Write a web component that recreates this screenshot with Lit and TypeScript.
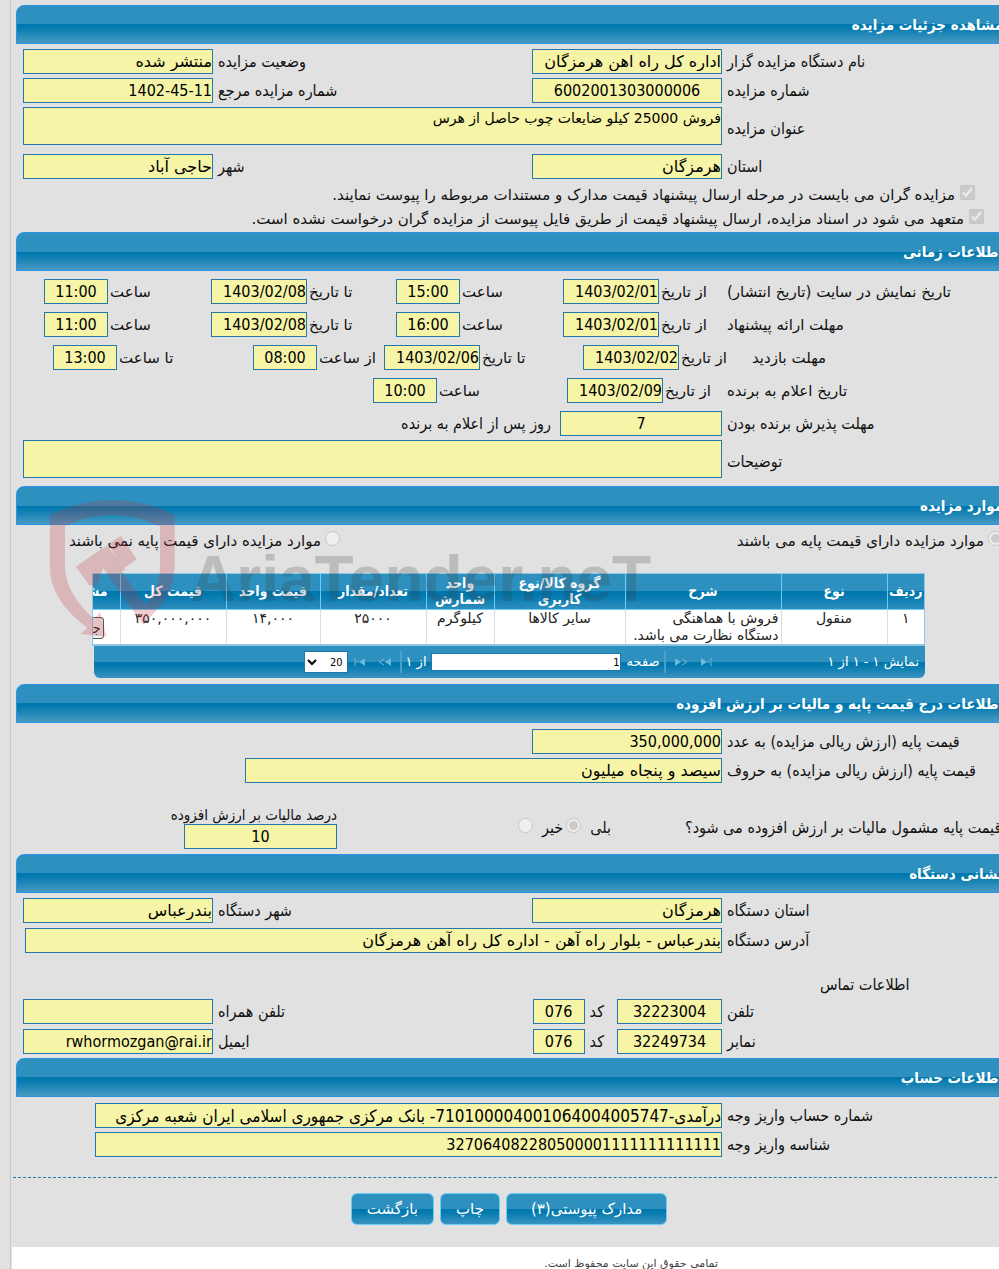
import { LitElement, html, css, svg, nothing } from "lit";
import { customElement } from "lit/decorators.js";

interface Pair {
  label: string;
  value: string;
  kind: "date" | "time";
}

interface TimeRow {
  title: string;
  cls: string;
  pairs: Pair[];
}

const d = (label: string, value: string): Pair => ({ label, value, kind: "date" });
const t = (label: string, value: string): Pair => ({ label, value, kind: "time" });

const TIME_ROWS: TimeRow[] = [
  {
    title: "تاریخ نمایش در سایت (تاریخ انتشار)",
    cls: "four",
    pairs: [d("از تاریخ", "1403/02/01"), t("ساعت", "15:00"), d("تا تاریخ", "1403/02/08"), t("ساعت", "11:00")],
  },
  {
    title: "مهلت ارائه پیشنهاد",
    cls: "four",
    pairs: [d("از تاریخ", "1403/02/01"), t("ساعت", "16:00"), d("تا تاریخ", "1403/02/08"), t("ساعت", "11:00")],
  },
  {
    title: "مهلت بازدید",
    cls: "visit",
    pairs: [d("از تاریخ", "1403/02/02"), d("تا تاریخ", "1403/02/06"), t("از ساعت", "08:00"), t("تا ساعت", "13:00")],
  },
  {
    title: "تاریخ اعلام به برنده",
    cls: "two",
    pairs: [d("از تاریخ", "1403/02/09"), t("ساعت", "10:00")],
  },
];

const COLUMNS = ["ردیف", "نوع", "شرح", "گروه کالا/نوع کاربری", "واحد شمارش", "تعداد/مقدار", "قیمت واحد", "قیمت کل"];
const ITEM = ["۱", "منقول", "فروش با هماهنگی دستگاه نظارت می باشد.", "سایر کالاها", "کیلوگرم", "۲۵۰۰۰", "۱۴,۰۰۰", "۳۵۰,۰۰۰,۰۰۰"];

@customElement("app-root")
export class AppRoot extends LitElement {
  static styles = css`
    :host {
      display: block;
      direction: rtl;
      overflow: hidden;
      background: #e1e1e1;
      color: #111;
      font: 16px/18px "DejaVu Sans Condensed", "DejaVu Sans", Tahoma, sans-serif;
    }
    * {
      box-sizing: border-box;
    }
    .page {
      margin-left: 10px;
      padding-top: 5px;
      border-left: 1px solid #c8c8c8;
      position: relative;
    }
    .bar {
      height: 39px;
      margin: 0 -8px 0 5px;
      padding: 0 3px 0 0;
      border: 1px solid #2b93e6;
      border-radius: 8px 8px 0 0;
      background: linear-gradient(#2e90bf 0 50%, #0078ae 50%, #0078ae 55%, #4799c2);
      color: #fff;
      font-size: 15px;
      font-weight: bold;
      line-height: 39px;
      white-space: nowrap;
    }
    .body {
      display: flex;
      flex-direction: column;
      gap: 4px;
      padding: 5px 0 5px 12px;
    }
    .body.start {
      padding-bottom: 1px;
    }
    .body.times {
      gap: 8px;
      padding: 8px 0 8px 12px;
    }
    .body.roomy {
      gap: 5px;
      padding-bottom: 4px;
    }
    .body.six {
      padding-top: 6px;
    }
    .row {
      display: flex;
      align-items: center;
      gap: 5px;
    }
    .pad {
      margin-top: 5px;
    }
    .snug {
      margin-top: -4px;
    }
    .lab {
      flex: none;
      width: 272px;
      text-align: left;
      white-space: nowrap;
    }
    .lab.low {
      padding-top: 6px;
    }
    .lab2 {
      flex: 1;
      text-align: left;
      white-space: nowrap;
    }
    input.f,
    textarea.f {
      display: block;
      flex: none;
      height: 25px;
      margin: 0;
      padding: 0;
      border: 1px solid #2379ae;
      border-radius: 0;
      background: #f6f4a6;
      color: #000;
      font: 16px/22px "DejaVu Sans Condensed", "DejaVu Sans", Tahoma, sans-serif;
      text-align: right;
      outline: none;
    }
    input.f.fa {
      font-family: "DejaVu Sans", Tahoma, sans-serif;
    }
    input.f.long {
      font-size: 17px;
    }
    input.mid {
      text-align: center;
    }
    .w190 {
      width: 190px;
    }
    .wide {
      flex: 1 !important;
      min-width: 0;
    }
    textarea.f {
      height: 38px;
      resize: none;
      overflow: hidden;
      font: 14px/20px "DejaVu Sans", Tahoma, sans-serif;
    }
    .check {
      display: flex;
      align-items: center;
      gap: 5px;
      height: 24px;
      padding-right: 24px;
      font: 15px/18px "DejaVu Sans", Tahoma, sans-serif;
      white-space: nowrap;
    }
    .check.near {
      padding-right: 15px;
    }
    .check input {
      width: 15px;
      height: 15px;
      margin: 0 0 6px;
    }
    .time {
      display: grid;
      align-items: center;
      font: 15px/18px "DejaVu Sans", Tahoma, sans-serif;
    }
    .time.four {
      grid-template-columns: 272px 164fr 167fr 185fr 167fr;
      padding-left: 21px;
    }
    .time.visit {
      grid-template-columns: 247px 169fr 199fr 131fr 200fr;
      padding-left: 30px;
    }
    .time.two {
      grid-template-columns: 272px 160fr 194fr 350fr;
    }
    .time .lab {
      width: auto;
    }
    .pair {
      display: flex;
      align-items: center;
      justify-content: flex-end;
      gap: 2px;
      white-space: nowrap;
    }
    .date {
      width: 96px;
    }
    .hour {
      width: 64px;
    }
    .days {
      width: 162px;
    }
    .after {
      padding-right: 4px;
    }

    .choices {
      display: flex;
      justify-content: space-between;
      height: 32px;
      align-items: center;
      padding-left: 58px;
      margin-right: -4px;
      font: 15px/18px "DejaVu Sans", Tahoma, sans-serif;
      white-space: nowrap;
    }
    .choices label {
      display: flex;
      align-items: center;
      gap: 4px;
    }
    input[type="radio"] {
      width: 15px;
      height: 15px;
      margin: 0 0 5px;
    }
    .gridbox {
      margin: 16px 74px 0 81px;
      overflow: hidden;
      border: 1px solid #8cc6e4;
      border-bottom-width: 2px;
      background: #fff;
    }
    table {
      width: 895px;
      border-collapse: collapse;
      table-layout: fixed;
      font: 14px/17px "DejaVu Sans", Tahoma, sans-serif;
    }
    th {
      height: 35px;
      padding: 0;
      border-left: 1px solid #6bcdf7;
      border-bottom: 1px solid #6bcdf7;
      background: linear-gradient(#2e90bf 0 50%, #0078ae 50%, #0078ae 60%, #2f8dbc);
      color: #fff;
      font: bold 14px/16px "DejaVu Sans Condensed", Tahoma, sans-serif;
    }
    th.c3 {
      padding: 0 16px;
    }
    td {
      height: 35px;
      padding: 0 2px;
      border-left: 1px solid #dcdcdc;
      vertical-align: top;
      text-align: center;
      color: #222;
    }
    td.desc {
      padding-left: 6px;
      text-align: right;
    }
    th.view {
      text-align: right;
      padding-right: 12px;
    }
    td.view {
      text-align: right;
      padding: 7px 16px 0 0;
    }
    .c0 { width: 37px; }
    .c1 { width: 106px; }
    .c2 { width: 156px; }
    .c3 { width: 131px; }
    .c4 { width: 68px; }
    .c5 { width: 106px; }
    .c6 { width: 94px; }
    .c7 { width: 106px; }
    .details {
      height: 22px;
      padding: 0 2px;
      border: 1px solid #555;
      border-radius: 3px;
      background: #efefef;
      font: 14px/18px "DejaVu Sans Condensed", "DejaVu Sans", sans-serif;
      color: #222;
    }
    .pager {
      display: grid;
      grid-template-columns: 1fr auto 1fr;
      align-items: center;
      height: 32px;
      margin: 0 74px 6px 83px;
      padding: 0 6px 0 8px;
      border-radius: 0 0 6px 6px;
      background: linear-gradient(#2e90bf 0 50%, #0078ae 50%, #0078ae 58%, #3a93c0);
      color: #fff;
      font: 13px/18px "DejaVu Sans", Tahoma, sans-serif;
      white-space: nowrap;
    }
    .tools {
      display: flex;
      align-items: center;
    }
    .tools label {
      display: flex;
      align-items: center;
      gap: 6px;
    }
    .nav {
      display: block;
      width: 14px;
      height: 10px;
      margin: 0 5px;
      padding: 0;
      border: 0;
      background: none;
    }
    .nav svg {
      display: block;
    }
    .sep {
      width: 2px;
      height: 22px;
      margin: 0 4px;
      background: #4a9fc8;
    }
    .pageno {
      width: 190px;
      height: 18px;
      padding: 0;
      margin-left: 4px;
      border: 1px solid #1f76a8;
      background: #fff;
      font: 11px/14px "DejaVu Sans Condensed", sans-serif;
    }
    .size {
      width: 44px;
      height: 22px;
      border: 1px solid #1f76a8;
      border-radius: 0;
      background: #fff;
      color: #000;
      font: 11px/18px "DejaVu Sans Condensed", sans-serif;
    }

    .vat {
      display: flex;
      align-items: center;
      margin-top: 20px;
      padding-left: 145px;
    }
    .ask {
      display: flex;
      justify-content: flex-end;
      flex: none;
      width: 314px;
      white-space: nowrap;
    }
    .yesno {
      display: flex;
      flex: 1;
      align-items: center;
      gap: 3px;
      padding-right: 74px;
    }
    .yesno label {
      display: flex;
      align-items: center;
      gap: 9px;
    }
    .percent {
      width: 169px;
      font-size: 15px;
      line-height: 17px;
      white-space: nowrap;
    }
    .percent input.f {
      width: 153px;
    }
    .contact {
      width: 179px;
      margin-top: 18px;
      text-align: left;
    }
    .phone {
      width: 105px;
    }
    .code {
      display: flex;
      align-items: center;
      gap: 5px;
      padding-right: 8px;
    }
    .code input.f {
      width: 52px;
    }
    .indent {
      padding-left: 72px;
    }
    .half {
      padding-left: 222px;
    }
    .slight {
      padding-left: 2px;
    }

    .actions {
      display: flex;
      justify-content: center;
      gap: 6px;
      margin: 15px 2px 0;
      padding: 15px 0 22px 8px;
      border-top: 1px dashed #2379ae;
    }
    .btn {
      height: 32px;
      padding: 0 15px;
      border: 1px solid #6bcdf7;
      border-radius: 6px;
      background: linear-gradient(#2e90bf 0 50%, #0078ae 50%, #0078ae 58%, #3a93c0);
      color: #fff;
      font: 15px/20px "DejaVu Sans", Tahoma, sans-serif;
    }
    .btn.big {
      padding: 0 24px;
    }
    footer {
      height: 22px;
      margin-left: 1px;
      padding: 8px 281px 0 0;
      background: #fff;
      color: #444;
      font: 11px/18px "DejaVu Sans", Tahoma, sans-serif;
      overflow: hidden;
    }

    .mark {
      position: absolute;
      left: 39px;
      top: 500px;
      display: flex;
      direction: ltr;
      pointer-events: none;
    }
    .mark span {
      margin: 34px 0 0 14px;
      color: rgba(60, 60, 60, 0.22);
      font: bold 64px/90px "Liberation Sans Narrow", "Liberation Sans", sans-serif;
    }
  `;

  private bar(text: string) {
    return html`<div class="bar" role="heading" aria-level="2">${text}</div>`;
  }

  private field(id: string, value: string, cls: string) {
    const script = /^[^0-9A-Za-z]+$/.test(value) ? "fa" : "";
    return html`<input class="f ${cls} ${script}" id=${id} .value=${value} readonly />`;
  }

  private double(id: string, a: string, av: string, b: string, bv: string, mid = "", cls = "") {
    return html`<div class="row ${cls}">
      <label class="lab" for="${id}a">${a}</label>${this.field(id + "a", av, "w190 " + mid)}
      <label class="lab2" for="${id}b">${b}</label>${this.field(id + "b", bv, "w190")}
    </div>`;
  }

  private single(id: string, a: string, av: string, cls: string, row = "") {
    return html`<div class="row ${row}">
      <label class="lab" for=${id}>${a}</label>${this.field(id, av, cls)}
    </div>`;
  }

  private phone(id: string, a: string, av: string, b: string, bv: string) {
    return html`<div class="row">
      <label class="lab" for="${id}a">${a}</label>${this.field(id + "a", av, "phone mid")}
      <div class="code"><label for="${id}c">کد</label>${this.field(id + "c", "076", "mid")}</div>
      <label class="lab2" for="${id}b">${b}</label>${this.field(id + "b", bv, "w190")}
    </div>`;
  }

  private nav(label: string, left: boolean, last: boolean) {
    const shape = left
      ? svg`<path d="M6 1 L6 9 L0 5 Z" transform="translate(${last ? 6 : 8})" />`
      : svg`<path d="M0 1 L6 5 L0 9 Z" transform="translate(${last ? 2 : 0})" />`;
    const extra = last
      ? svg`<path d=${left ? "M2 1V9M3 5H6" : "M12 1V9M8 5H11"} fill="none" stroke="#6bb8dc" />`
      : svg`<path d=${left ? "M7 2L2 5L7 8" : "M7 2L12 5L7 8"} fill="none" stroke="#6bb8dc" />`;
    return html`<button class="nav" aria-label=${label} disabled>
      <svg width="14" height="10" fill="#6bb8dc">${shape}${extra}</svg>
    </button>`;
  }

  render() {
    return html`<main class="page">
        ${this.bar("مشاهده جزئیات مزایده")}
        <div class="body start">
          ${this.double("n", "نام دستگاه مزایده گزار", "اداره کل راه اهن هرمزگان", "وضعیت مزایده", "منتشر شده")}
          ${this.double("s", "شماره مزایده", "6002001303000006", "شماره مزایده مرجع", "1402-45-11", "mid")}
          <div class="row">
            <label class="lab low" for="ttl">عنوان مزایده</label>
            <textarea class="f wide" id="ttl" readonly .value=${"فروش 25000 کیلو ضایعات چوب حاصل از هرس"}></textarea>
          </div>
          ${this.double("o", "استان", "هرمزگان", "شهر", "حاجی آباد", "", "pad")}
          <div>
            <label class="check"><input type="checkbox" checked disabled />مزایده گران می بایست در مرحله ارسال پیشنهاد قیمت مدارک و مستندات مربوطه را پیوست نمایند.</label>
            <label class="check near"><input type="checkbox" checked disabled />متعهد می شود در اسناد مزایده، ارسال پیشنهاد قیمت از طریق فایل پیوست از مزایده گران درخواست نشده است.</label>
          </div>
        </div>

        ${this.bar("اطلاعات زمانی")}
        <div class="body times">
          ${TIME_ROWS.map(
            (r) => html`<div class="time ${r.cls}">
              <span class="lab">${r.title}</span>
              ${r.pairs.map(
                (p) => html`<label class="pair">${p.label}<input
                    class="f ${p.kind === "date" ? "date" : "hour mid"}"
                    .value=${p.value}
                    readonly /></label>`
              )}
            </div>`
          )}
          <div class="row">
            <label class="lab" for="days">مهلت پذیرش برنده بودن</label>${this.field("days", "7", "days mid")}
            <span class="after">روز پس از اعلام به برنده</span>
          </div>
          <div class="row snug">
            <label class="lab low" for="notes">توضیحات</label>
            <textarea class="f wide" id="notes" readonly></textarea>
          </div>
        </div>

        ${this.bar("موارد مزایده")}
        <div class="choices">
          <label><input type="radio" name="base" checked disabled />موارد مزایده دارای قیمت پایه می باشند</label>
          <label><input type="radio" name="base" disabled />موارد مزایده دارای قیمت پایه نمی باشند</label>
        </div>
        <div class="gridbox">
          <table>
            <thead>
              <tr>
                ${COLUMNS.map((c, i) => html`<th class="c${i}">${c}</th>`)}
                <th class="view">مشاهده</th>
              </tr>
            </thead>
            <tbody>
              <tr>
                ${ITEM.map((c, i) => html`<td class=${i === 2 ? "desc" : nothing}>${c}</td>`)}
                <td class="view"><button class="details">جزئیات</button></td>
              </tr>
            </tbody>
          </table>
        </div>
        <div class="pager">
          <span>نمایش ۱ - ۱ از ۱</span>
          <div class="tools">
            ${this.nav("اولین", false, true)}${this.nav("قبلی", false, false)}
            <i class="sep"></i>
            <label>صفحه<input class="pageno" .value=${"1"} /></label>
            <span>از ۱</span>
            <i class="sep"></i>
            ${this.nav("بعدی", true, false)}${this.nav("آخرین", true, true)}
            <select class="size" aria-label="تعداد در صفحه">
              <option>20</option>
            </select>
          </div>
        </div>

        ${this.bar("اطلاعات درج قیمت پایه و مالیات بر ارزش افزوده")}
        <div class="body six">
          ${this.single("p1", "قیمت پایه (ارزش ریالی مزایده) به عدد", "350,000,000", "w190")}
          ${this.single("p2", "قیمت پایه (ارزش ریالی مزایده) به حروف", "سیصد و پنجاه میلیون", "wide", "half")}
          <div class="vat">
            <span class="ask">قیمت پایه مشمول مالیات بر ارزش افزوده می شود؟</span>
            <div class="yesno">
              <label>بلی<input type="radio" name="vat" checked disabled /></label>
              <label>خیر<input type="radio" name="vat" disabled /></label>
            </div>
            <label class="percent">درصد مالیات بر ارزش افزوده<input class="f mid" .value=${"10"} readonly /></label>
          </div>
        </div>

        ${this.bar("نشانی دستگاه")}
        <div class="body roomy">
          ${this.double("d", "استان دستگاه", "هرمزگان", "شهر دستگاه", "بندرعباس")}
          ${this.single("ad", "آدرس دستگاه", "بندرعباس - بلوار راه آهن - اداره کل راه آهن هرمزگان", "wide", "slight")}
          <div class="contact">اطلاعات تماس</div>
          ${this.phone("t", "تلفن", "32223004", "تلفن همراه", "")}
          ${this.phone("x", "نمابر", "32249734", "ایمیل", "rwhormozgan@rai.ir")}
        </div>

        ${this.bar("اطلاعات حساب")}
        <div class="body six">
          ${this.single("a1", "شماره حساب واریز وجه", "درآمدی-710100004001064004005747- بانک مرکزی جمهوری اسلامی ایران شعبه مرکزی", "wide long", "indent")}
          ${this.single("a2", "شناسه واریز وجه", "327064082280500001111111111111", "wide", "indent")}
        </div>

        <div class="actions">
          <button class="btn big">مدارک پیوستی(۳)</button>
          <button class="btn">چاپ</button>
          <button class="btn">بازگشت</button>
        </div>
        <footer>تمامی حقوق این سایت محفوظ است.</footer>

        <div class="mark" aria-hidden="true">
          <svg width="126" height="140" viewBox="0 0 378 420" fill="#c03038" fill-opacity="0.24">
            <path d="M0 45 Q187 -45 374 45 V200 Q370 268 336 312 L280 375 L160 205 L140 258 L118 256 L77 200 L118 172 L158 145 L215 214 L285 313 Q330 268 330 200 V78 Q187 12 45 78 V205 Q50 285 133 358 L150 335 L170 410 L92 402 L112 384 Q0 300 0 205 Z" />
            <path d="M160 145 L172 137 L226 209 L213 214 Z M175 132 L213 108 L260 178 L219 206 Z" />
          </svg>
          <span>AriaTender.neT</span>
        </div>
      </main>`;
  }
}
